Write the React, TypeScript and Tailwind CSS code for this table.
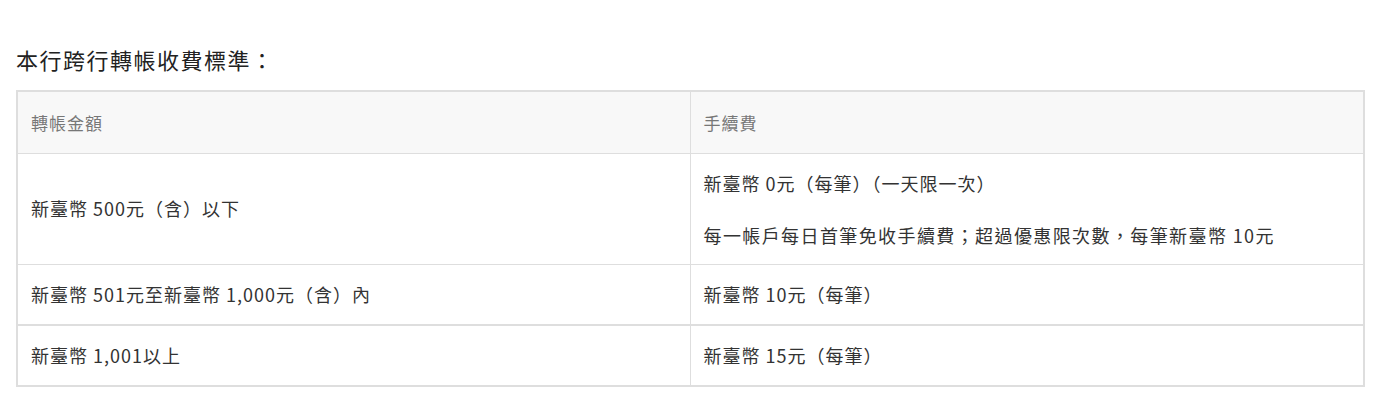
import React from "react";

const font = { fontFamily: '"Noto Sans CJK TC", "Noto Sans", sans-serif' };

export default function App() {
  return (
    <div className="bg-white w-[1380px] h-[416px] px-4 pt-[43px] text-[#333]" style={font}>
      <h2 className="text-[22px] leading-[33px] tracking-[1.5px] text-[#222] font-normal">本行跨行轉帳收費標準：</h2>
      <table className="mt-[14px] w-[1349px] border-collapse border-2 border-[#dedede] text-[18px] tracking-[1px]">
        <thead>
          <tr className="bg-[#f8f8f8] h-[62px]">
            <th className="w-[673px] border border-[#dedede] px-[13px] text-left font-normal text-[#777] text-[17px]">轉帳金額</th>
            <th className="border border-[#dedede] px-[13px] text-left font-normal text-[#777] text-[17px]">手續費</th>
          </tr>
        </thead>
        <tbody>
          <tr className="h-[111px]">
            <td className="border border-[#dedede] px-[13px]">新臺幣 500元（含）以下</td>
            <td className="border border-[#dedede] px-[13px]">
              <div className="flex flex-col gap-[26px]">
                <p className="leading-[26px]">新臺幣 0元（每筆）（一天限一次）</p>
                <p className="leading-[26px] tracking-[1.4px]">每一帳戶每日首筆免收手續費；超過優惠限次數，每筆新臺幣 10元</p>
              </div>
            </td>
          </tr>
          <tr className="h-[61px] border-b-2 border-[#dedede]">
            <td className="border border-[#dedede] px-[13px]">新臺幣 501元至新臺幣 1,000元（含）內</td>
            <td className="border border-[#dedede] px-[13px]">新臺幣 10元（每筆）</td>
          </tr>
          <tr className="h-[61px]">
            <td className="border border-[#dedede] px-[13px]">新臺幣 1,001以上</td>
            <td className="border border-[#dedede] px-[13px]">新臺幣 15元（每筆）</td>
          </tr>
        </tbody>
      </table>
    </div>
  );
}
